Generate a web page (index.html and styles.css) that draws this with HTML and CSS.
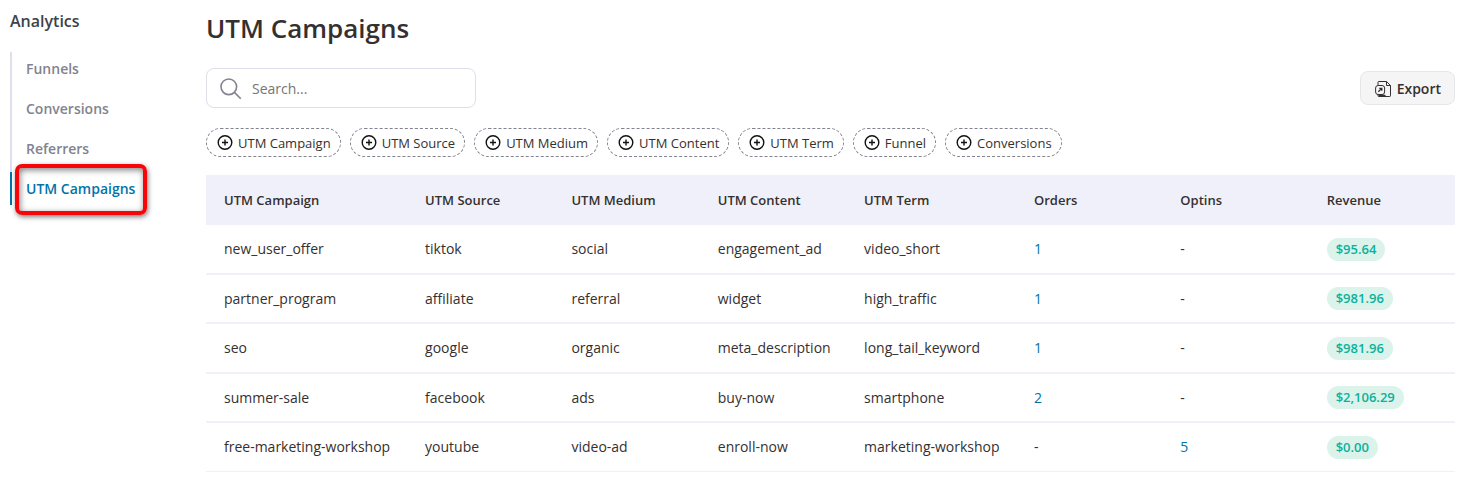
FILE: index.html
```html
<!DOCTYPE html>
<html lang="en">
<head>
<meta charset="utf-8">
<title>UTM Campaigns</title>
<link rel="stylesheet" href="styles.css">
</head>
<body>
<svg class="sprite" aria-hidden="true">
  <symbol id="plus" viewBox="0 0 16 16"><circle cx="8" cy="7.500" r="6.800" fill="none" stroke="currentColor" stroke-width="1.4"/><path d="M8 4.500v6M5 7.500h6" fill="none" stroke="currentColor" stroke-width="1.4"/></symbol>
</svg>
<div class="layout">
  <aside class="sidebar">
    <h2 class="sidebar-title">Analytics</h2>
    <nav>
      <ul class="nav">
        <li><a class="nav-link" href="#funnels">Funnels</a></li>
        <li><a class="nav-link" href="#conversions">Conversions</a></li>
        <li><a class="nav-link" href="#referrers">Referrers</a></li>
        <li><a class="nav-link active" href="#utm" aria-current="page">UTM Campaigns<span class="callout"></span></a></li>
      </ul>
    </nav>
  </aside>
  <main class="main">
    <h1 class="title">UTM Campaigns</h1>
    <div class="toolbar">
      <label class="search">
        <svg class="search-icon" viewBox="0 0 22 22" aria-hidden="true"><circle cx="8.8" cy="8.8" r="7.8"/><path d="M14.4 14.4l6.4 6.4"/></svg>
        <input class="search-input" type="search" placeholder="Search..." aria-label="Search">
      </label>
      <button class="export" type="button">
        <svg class="export-icon" viewBox="0 0 16 16" aria-hidden="true"><path d="M3 4V1.200c0-.4.3-.7.7-.7h7.800l4 4v10.300c0 .4-.3.7-.7.7H3.700a.7.7 0 0 1-.7-.7V13.500"/><path d="M11.500.5v4h4"/><path d="M3.500 14.500h7" stroke-width="1.500"/><rect x=".6" y="4.500" width="9" height="9" rx="2.500"/><path d="M3.300 10.800l3.400-3.400M4.300 7.300h2.500v2.500" stroke-width="1.300"/></svg>
        Export
      </button>
    </div>
    <div class="filters">
      <button class="chip" type="button"><svg class="plus"><use href="#plus"/></svg>UTM Campaign</button>
      <button class="chip" type="button"><svg class="plus"><use href="#plus"/></svg>UTM Source</button>
      <button class="chip" type="button"><svg class="plus"><use href="#plus"/></svg>UTM Medium</button>
      <button class="chip" type="button"><svg class="plus"><use href="#plus"/></svg>UTM Content</button>
      <button class="chip" type="button"><svg class="plus"><use href="#plus"/></svg>UTM Term</button>
      <button class="chip" type="button"><svg class="plus"><use href="#plus"/></svg>Funnel</button>
      <button class="chip" type="button"><svg class="plus"><use href="#plus"/></svg>Conversions</button>
    </div>
    <table class="table">
      <colgroup><col class="col-campaign"><col><col><col><col class="col-term"><col><col><col></colgroup>
      <thead>
        <tr><th>UTM Campaign</th><th>UTM Source</th><th>UTM Medium</th><th>UTM Content</th><th>UTM Term</th><th>Orders</th><th>Optins</th><th>Revenue</th></tr>
      </thead>
      <tbody>
        <tr><td>new_user_offer</td><td>tiktok</td><td>social</td><td>engagement_ad</td><td>video_short</td><td><a class="count" href="#orders">1</a></td><td>-</td><td><span class="badge">$95.64</span></td></tr>
        <tr><td>partner_program</td><td>affiliate</td><td>referral</td><td>widget</td><td>high_traffic</td><td><a class="count" href="#orders">1</a></td><td>-</td><td><span class="badge">$981.96</span></td></tr>
        <tr><td>seo</td><td>google</td><td>organic</td><td>meta_description</td><td>long_tail_keyword</td><td><a class="count" href="#orders">1</a></td><td>-</td><td><span class="badge">$981.96</span></td></tr>
        <tr><td>summer-sale</td><td>facebook</td><td>ads</td><td>buy-now</td><td>smartphone</td><td><a class="count" href="#orders">2</a></td><td>-</td><td><span class="badge">$2,106.29</span></td></tr>
        <tr><td>free-marketing-workshop</td><td>youtube</td><td>video-ad</td><td>enroll-now</td><td>marketing-workshop</td><td>-</td><td><a class="count" href="#optins">5</a></td><td><span class="badge">$0.00</span></td></tr>
      </tbody>
    </table>
  </main>
</div>
</body>
</html>
```
FILE: styles.css
```css
* { box-sizing: border-box; }
body {
  margin: 0;
  background: #fff;
  color: #353030;
  font: 13px/20px "Segoe UI", "Open Sans", "Noto Sans", sans-serif;
}
button, input { font: inherit; color: inherit; }
.sprite { display: none; }
.layout { display: flex; padding: 10px 12px 12px 10px; }

.sidebar { flex: 0 0 196px; }
.sidebar-title {
  margin: 0 0 20px;
  font-size: 16px;
  line-height: 22px;
  font-weight: 600;
  color: #3c434a;
}
.nav { margin: 0; padding: 0; list-style: none; }
.nav li { padding-bottom: 7px; border-left: 2px solid #dedfea; }
.nav li:last-child { padding-bottom: 0; border-color: #0073aa; }
.nav-link {
  position: relative;
  display: inline-block;
  padding: 0 7px 0 14px;
  font-size: 14px;
  line-height: 33px;
  font-weight: 600;
  color: #82838e;
  text-decoration: none;
  vertical-align: top;
}
.nav-link.active { color: #0073aa; }
.callout {
  position: absolute;
  inset: -8px -5px -10px 3px;
  border: 4px solid #f80509;
  border-radius: 7px;
  box-shadow: 1px 2px 5px rgba(0, 0, 0, .5), inset 1px 2px 6px rgba(0, 0, 0, .5);
  pointer-events: none;
}

.main { flex: 1; min-width: 0; }
.title {
  margin: 0 0 21px;
  font-size: 26px;
  line-height: 37px;
  font-weight: 600;
}
.toolbar { display: flex; justify-content: space-between; align-items: center; }
.search {
  display: flex;
  align-items: center;
  gap: 10px;
  width: 270px;
  height: 40px;
  padding: 1px 12px 0 13px;
  border: 1px solid #dedfea;
  border-radius: 8px;
}
.search-icon { flex: none; width: 22px; height: 22px; fill: none; stroke: #82838e; stroke-width: 1.6; }
.search-input {
  flex: 1;
  min-width: 0;
  padding: 0;
  border: 0;
  outline: 0;
  background: none;
  font-size: 14px;
}
.search-input::placeholder { color: #757575; }
.export {
  display: flex;
  align-items: center;
  gap: 6px;
  height: 34px;
  padding: 1px 13px 0 14px;
  border: 1px solid #e5e6e8;
  border-radius: 8px;
  background: #f5f5f5;
  font-size: 14px;
  font-weight: 600;
}
.export-icon { width: 16px; height: 16px; fill: none; stroke: #353030; }

.filters { display: flex; flex-wrap: wrap; gap: 9px; margin: 20px 0 18px; }
.chip {
  display: flex;
  align-items: center;
  gap: 5px;
  height: 29px;
  padding: 0 9px 0 10px;
  border: 1px dashed #82838e;
  border-radius: 15px;
  background: #fff;
}
.plus { width: 16px; height: 16px; color: #111; }

.table { width: 100%; border-collapse: separate; border-spacing: 0; table-layout: fixed; }
.col-campaign { width: 16.1%; }
.col-term { width: 13.6%; }
.table th, .table td { padding: 0 18px; text-align: left; white-space: nowrap; }
.table th { height: 50px; background: #f0f0fa; font-weight: 600; }
.table td { height: 50px; border-bottom: 2px solid #f0f0fa; font-size: 14px; }
.table tr:nth-child(even) td { height: 49px; }
.table tr:last-child td { height: 49px; border-bottom-width: 1px; }
.count { color: #0073aa; text-decoration: none; }
.badge {
  display: inline-block;
  padding: 0 9px;
  border-radius: 12px;
  background: #dbf3eb;
  color: #09b29c;
  font-size: 13px;
  line-height: 23px;
  font-weight: 600;
}
```
